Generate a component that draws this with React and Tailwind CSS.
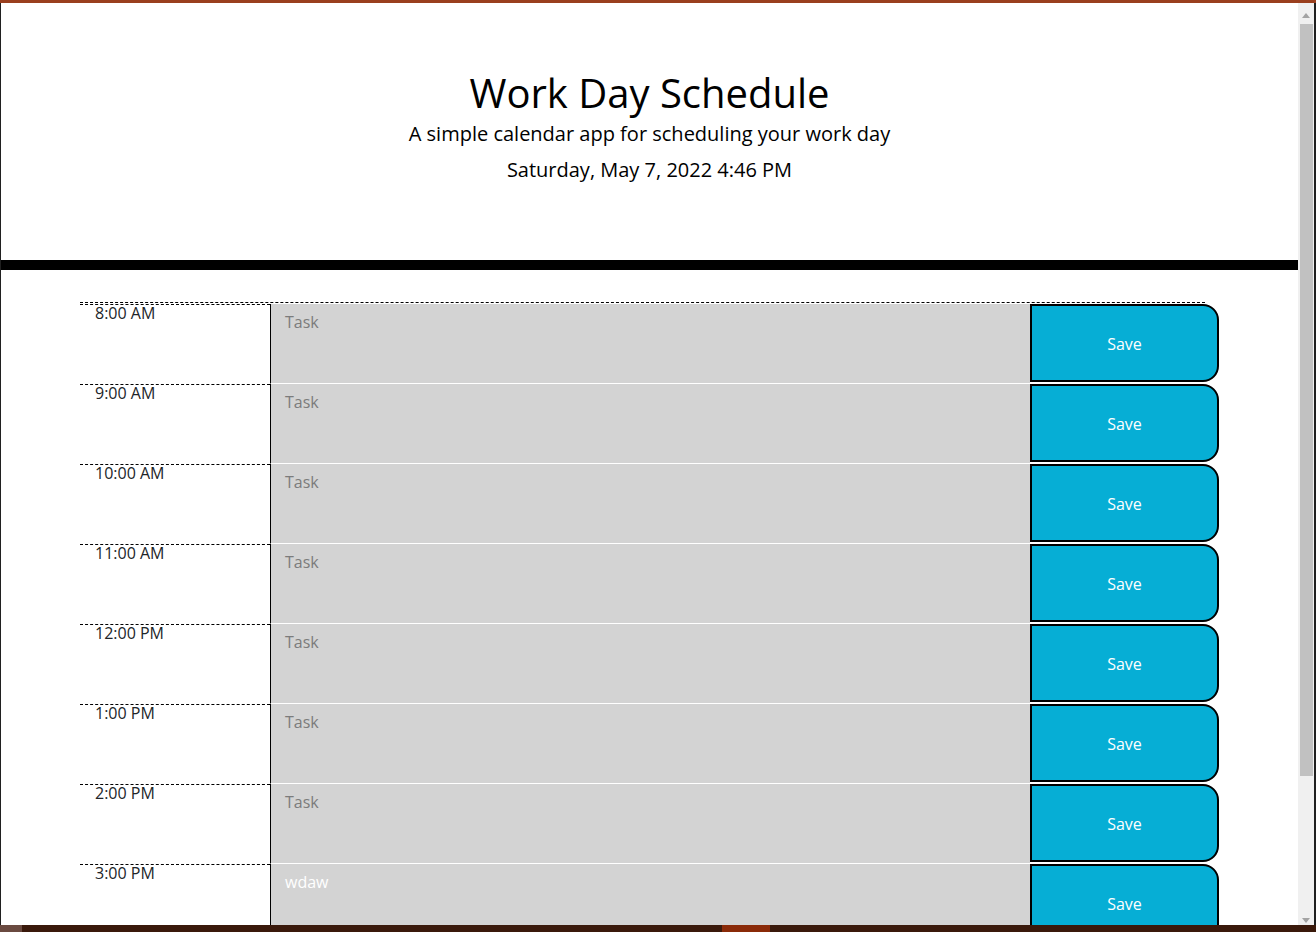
import React from 'react';

const hours = ['8:00 AM', '9:00 AM', '10:00 AM', '11:00 AM', '12:00 PM', '1:00 PM', '2:00 PM', '3:00 PM'];

function TimeBlock({ hour, value }) {
  return (
    <div className="flex h-[80px]">
      <div className="w-[190px] border-t border-dashed border-black pl-[15px] text-[16px] leading-[16px] text-[#212529]">
        {hour}
      </div>
      <textarea
        defaultValue={value}
        placeholder="Task"
        className="w-[760px] h-[80px] resize-none bg-[#d3d3d3] border-l border-l-black border-b border-b-white pt-[6px] pl-[14px] text-[16px] text-white placeholder:text-[#7c7c7c] outline-none"
      />
      <button className="w-[189px] h-[78px] bg-[#06aed5] border-2 border-black rounded-r-[16px] text-white text-[16px] pt-[1px]">
        Save
      </button>
    </div>
  );
}

export default function App() {
  return (
    <div className="w-[1316px] h-[932px] flex flex-col overflow-hidden bg-white" style={{ fontFamily: '"Open Sans", sans-serif' }}>
      <div className="h-[3px] bg-[#9a3f1e]" />
      <div className="flex flex-1 min-h-0">
        <div className="w-px bg-[#202020]" />
        <div className="flex-1 overflow-hidden">
          <header className="pt-[66px] pb-[75px] text-center text-black">
            <h1 className="text-[40px] leading-[48px]">Work Day Schedule</h1>
            <p className="mt-[2px] text-[20px] leading-[30px]">A simple calendar app for scheduling your work day</p>
            <p className="mt-[6px] text-[20px] leading-[30px]">Saturday, May 7, 2022 4:46 PM</p>
          </header>
          <div className="h-[10px] bg-black" />
          <div className="ml-[79px] mt-[32px]">
            <div className="w-[1125px] border-t border-dashed border-black" />
            <div className="pt-px">
              {hours.map((h, i) => (
                <TimeBlock key={h} hour={h} value={i === 7 ? 'wdaw' : ''} />
              ))}
            </div>
          </div>
        </div>
        <div className="w-[16px] bg-[#f0f0f0] flex flex-col items-center">
          <svg width="8" height="5" viewBox="0 0 8 5" className="mt-[10px]">
            <polygon points="0,5 4,0 8,5" fill="#a3a3a3" />
          </svg>
          <div className="mt-[6px] w-[13px] h-[752px] bg-[#c1c1c1]" />
          <div className="flex-1" />
          <svg width="8" height="5" viewBox="0 0 8 5" className="mb-[2px]">
            <polygon points="0,0 8,0 4,5" fill="#a3a3a3" />
          </svg>
        </div>
        <div className="w-[2px] bg-[#1f1f1f]" />
      </div>
      <div className="h-[7px] flex bg-[#3a190b]">
        <div className="w-[22px] bg-[#6a4a40]" />
        <div className="w-[700px]" />
        <div className="w-[48px] bg-[#8a2a08]" />
      </div>
    </div>
  );
}
